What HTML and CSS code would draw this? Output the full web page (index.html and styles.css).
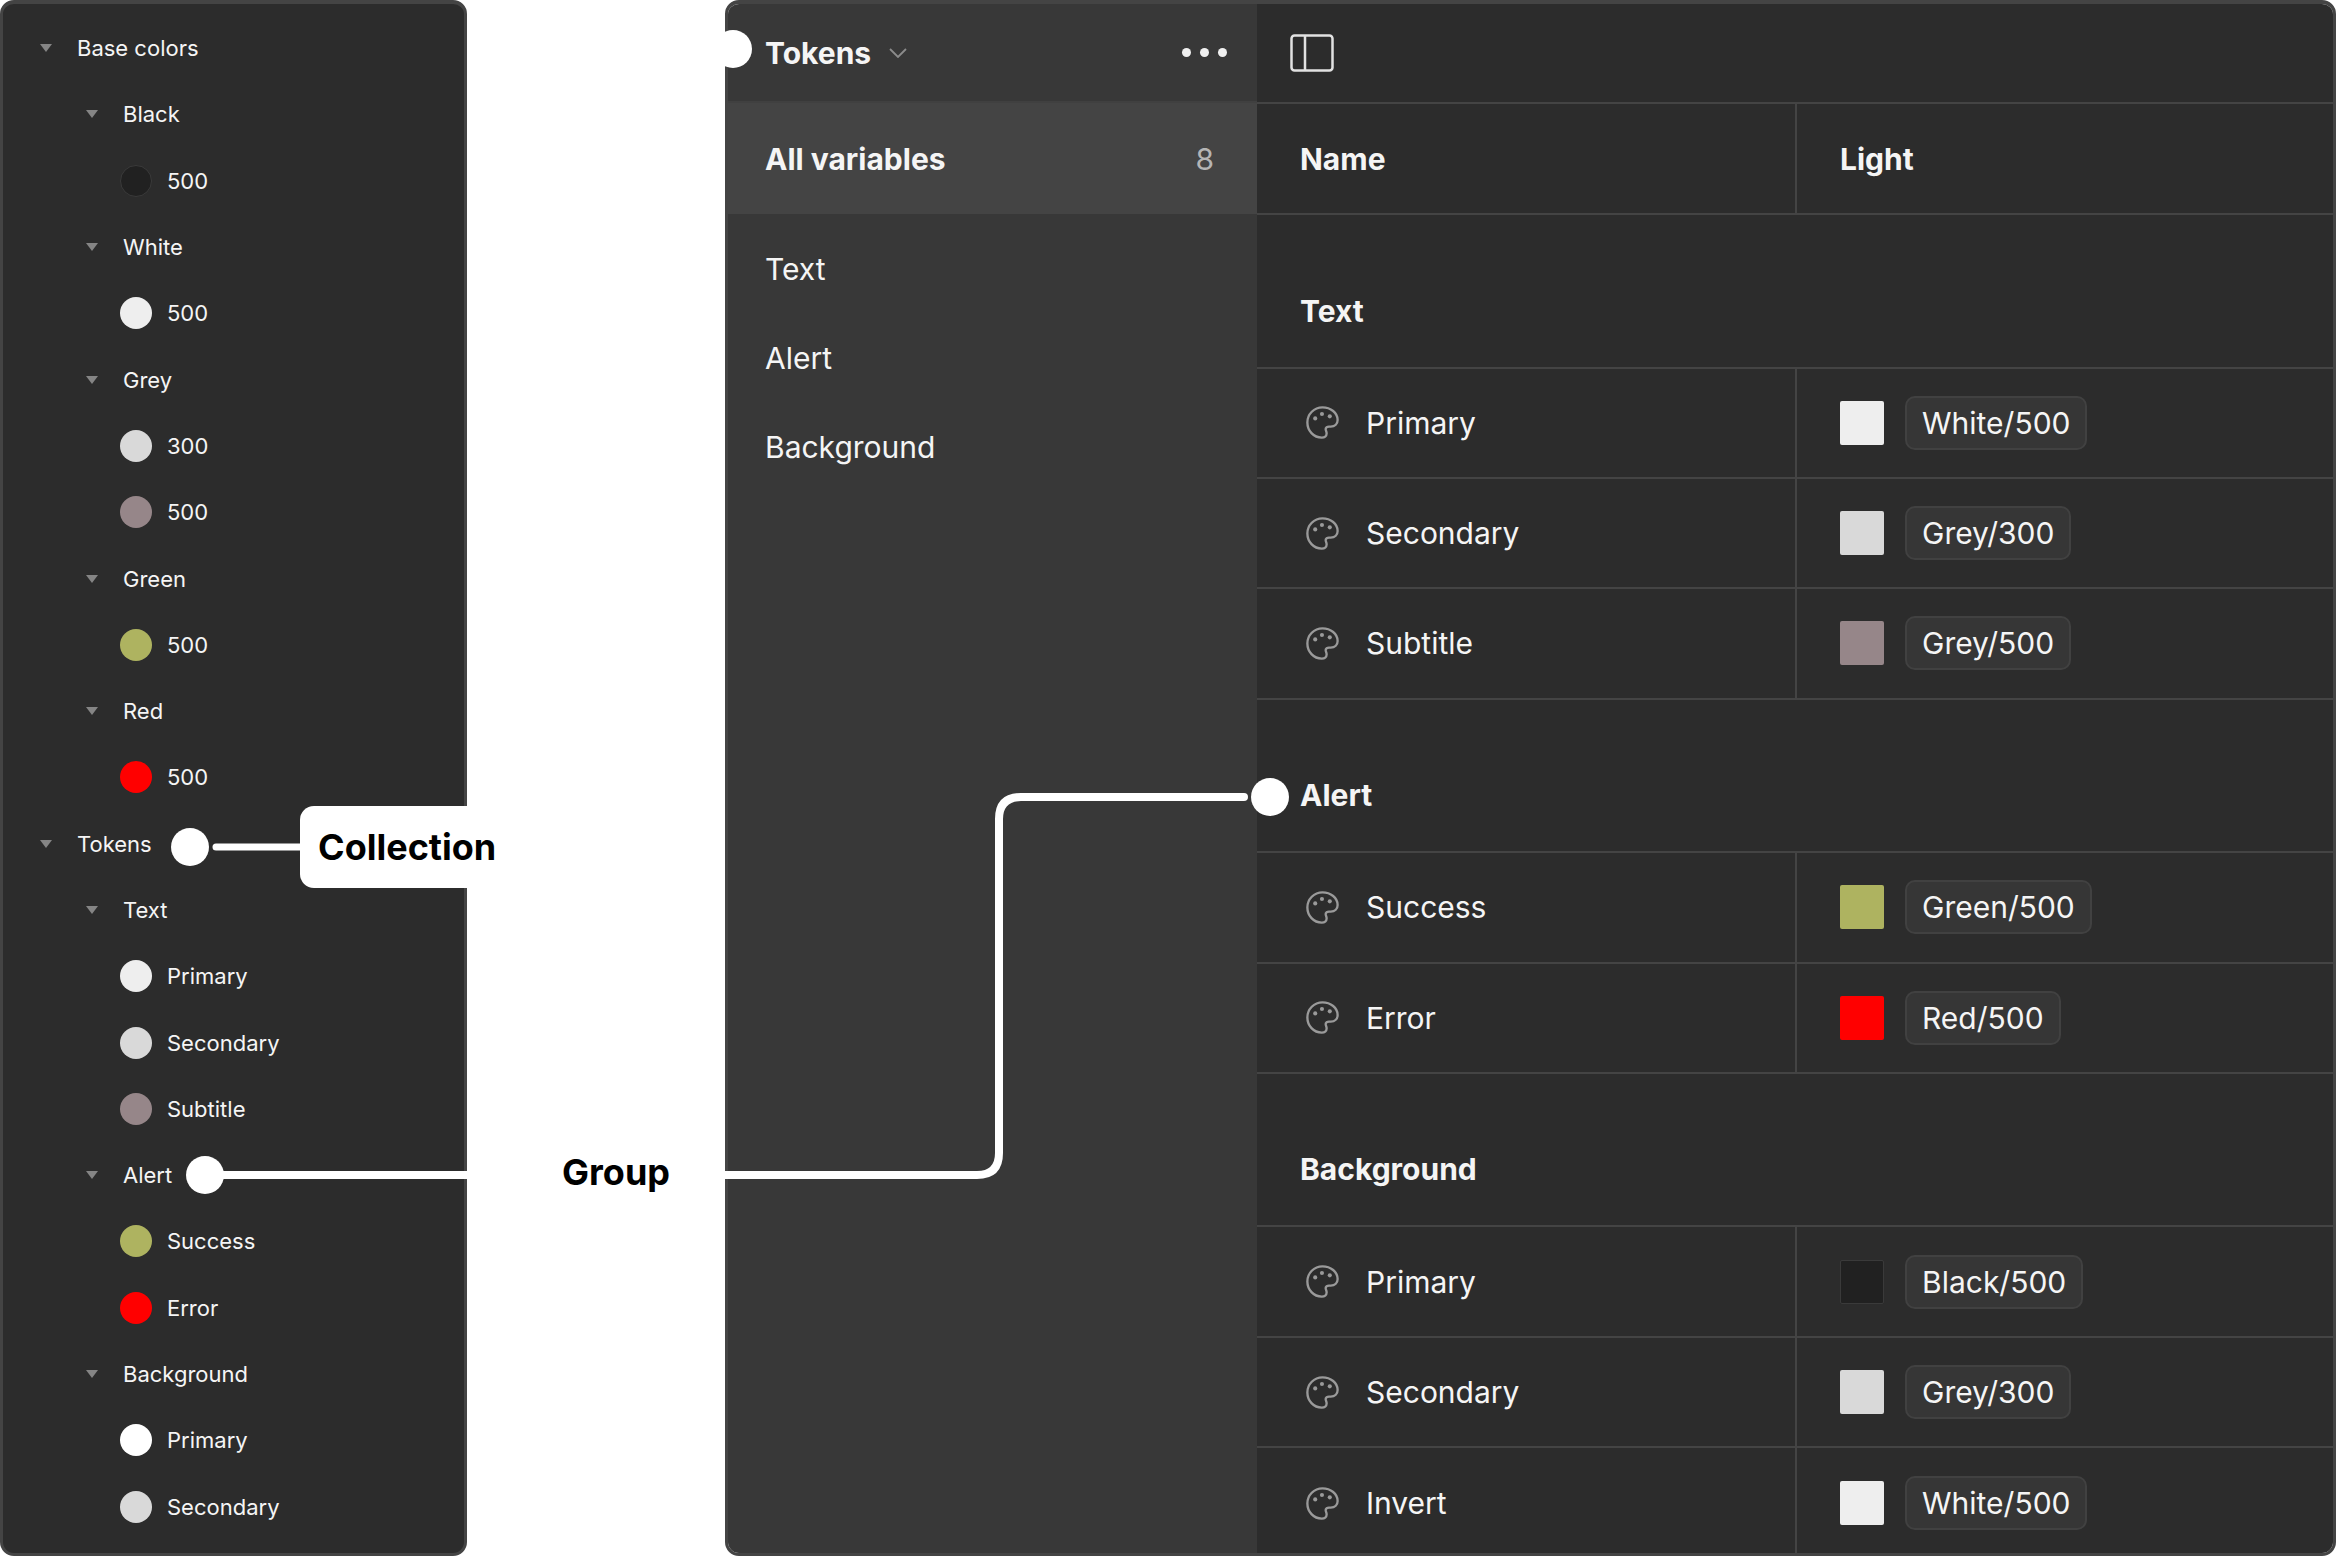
FILE: index.html
```html
<!DOCTYPE html>
<html lang="en">
<head>
    <meta charset="UTF-8">
    <title>Tokens</title>
    <link rel="stylesheet" href="styles.css">
</head>
<body>
<svg width="0" height="0" class="defs">
    <symbol id="palette" viewBox="0 0 24 24">
        <path d="M12 1C5.9 1 1 5.9 1 12c0 6 4.5 11 10.5 11 2 0 3.5-1.2 3.5-3 0-1.500-.7-2-.7-3.200 0-1.300 1.100-1.800 2.400-1.800H18c3 0 5-2 5-4.800C23 5 18 1 12 1z" fill="none" stroke="#9a9a9a" stroke-width="1.700"/>
        <circle cx="6.700" cy="9" r="1.500" fill="#9a9a9a"/>
        <circle cx="11.600" cy="5.800" r="1.500" fill="#9a9a9a"/>
        <circle cx="17.300" cy="7.500" r="1.500" fill="#9a9a9a"/>
    </symbol>
</svg>

<div class="page">
    <!-- layer list -->
    <div class="layers">
        <div class="layer lv0"><i class="tri"></i>Base colors</div>
        <div class="layer lv1"><i class="tri"></i>Black</div>
        <div class="layer lv2"><i class="dot black"></i>500</div>
        <div class="layer lv1"><i class="tri"></i>White</div>
        <div class="layer lv2"><i class="dot white"></i>500</div>
        <div class="layer lv1"><i class="tri"></i>Grey</div>
        <div class="layer lv2"><i class="dot grey3"></i>300</div>
        <div class="layer lv2"><i class="dot grey5"></i>500</div>
        <div class="layer lv1"><i class="tri"></i>Green</div>
        <div class="layer lv2"><i class="dot green"></i>500</div>
        <div class="layer lv1"><i class="tri"></i>Red</div>
        <div class="layer lv2"><i class="dot red"></i>500</div>
        <div class="layer lv0"><i class="tri"></i>Tokens</div>
        <div class="layer lv1"><i class="tri"></i>Text</div>
        <div class="layer lv2"><i class="dot white"></i>Primary</div>
        <div class="layer lv2"><i class="dot grey3"></i>Secondary</div>
        <div class="layer lv2"><i class="dot grey5"></i>Subtitle</div>
        <div class="layer lv1"><i class="tri"></i>Alert</div>
        <div class="layer lv2"><i class="dot green"></i>Success</div>
        <div class="layer lv2"><i class="dot red"></i>Error</div>
        <div class="layer lv1"><i class="tri"></i>Background</div>
        <div class="layer lv2"><i class="dot pure"></i>Primary</div>
        <div class="layer lv2"><i class="dot grey3"></i>Secondary</div>
    </div>

    <div class="gap"></div>

    <!-- variables window -->
    <div class="window">
        <div class="side">
            <div class="side-head">
                <span class="coll-name">Tokens</span>
                <svg class="chev" width="18" height="10" viewBox="0 0 18 10"><path d="M1 1l8 8 8-8" fill="none" stroke="#8c8c8c" stroke-width="1.800"/></svg>
                <div class="more"><i></i><i></i><i></i></div>
            </div>
            <div class="side-all"><span>All variables</span><span class="count">8</span></div>
            <div class="side-item first">Text</div>
            <div class="side-item">Alert</div>
            <div class="side-item">Background</div>
        </div>

        <div class="table">
            <div class="toolbar">
                <svg width="44" height="38" viewBox="0 0 44 38"><rect x="1.500" y="1.500" width="41" height="35" rx="3" fill="none" stroke="#e2e2e2" stroke-width="2.500"/><path d="M15 2v34" stroke="#e2e2e2" stroke-width="2.500"/></svg>
            </div>
            <div class="row head">
                <div class="c-name">Name</div>
                <div class="c-val">Light</div>
            </div>

            <div class="group">Text</div>
            <div class="row">
                <div class="c-name"><svg class="pal"><use href="#palette"/></svg>Primary</div>
                <div class="c-val"><i class="sw white"></i><span class="chip">White/500</span></div>
            </div>
            <div class="row">
                <div class="c-name"><svg class="pal"><use href="#palette"/></svg>Secondary</div>
                <div class="c-val"><i class="sw grey3"></i><span class="chip">Grey/300</span></div>
            </div>
            <div class="row">
                <div class="c-name"><svg class="pal"><use href="#palette"/></svg>Subtitle</div>
                <div class="c-val"><i class="sw grey5"></i><span class="chip">Grey/500</span></div>
            </div>

            <div class="group">Alert</div>
            <div class="row">
                <div class="c-name"><svg class="pal"><use href="#palette"/></svg>Success</div>
                <div class="c-val"><i class="sw green"></i><span class="chip">Green/500</span></div>
            </div>
            <div class="row">
                <div class="c-name"><svg class="pal"><use href="#palette"/></svg>Error</div>
                <div class="c-val"><i class="sw red"></i><span class="chip">Red/500</span></div>
            </div>

            <div class="group">Background</div>
            <div class="row">
                <div class="c-name"><svg class="pal"><use href="#palette"/></svg>Primary</div>
                <div class="c-val"><i class="sw black"></i><span class="chip">Black/500</span></div>
            </div>
            <div class="row">
                <div class="c-name"><svg class="pal"><use href="#palette"/></svg>Secondary</div>
                <div class="c-val"><i class="sw grey3"></i><span class="chip">Grey/300</span></div>
            </div>
            <div class="row last">
                <div class="c-name"><svg class="pal"><use href="#palette"/></svg>Invert</div>
                <div class="c-val"><i class="sw white"></i><span class="chip">White/500</span></div>
            </div>
        </div>
    </div>

    <!-- annotations on top -->
    <svg class="marks" width="2336" height="1556" viewBox="0 0 2336 1556">
        <g fill="none" stroke="#fff" stroke-linecap="round">
            <path d="M216 847H302" stroke-width="7"/>
            <path d="M205 1175H467" stroke-width="8"/>
            <path d="M725 1175H977Q999 1175 999 1153V819Q999 797 1021 797H1244" stroke-width="8"/>
        </g>
        <g fill="#fff">
            <circle cx="190" cy="847" r="19"/>
            <circle cx="205" cy="1175" r="19"/>
            <circle cx="733" cy="49" r="19"/>
            <circle cx="1270" cy="797" r="19"/>
        </g>
    </svg>
    <div class="label collection">Collection</div>
    <div class="label group-label">Group</div>
</div>
</body>
</html>
```

FILE: styles.css
```css
*{
    box-sizing: border-box;
}
body{
    margin: 0;
    background-color: white;
    font-family: Inter, "Liberation Sans", sans-serif;
    color: #f5f5f5;
}
i{
    display: block;
    flex: none;
}
.defs{
    position: absolute;
}
.page{
    position: relative;
    display: flex;
    width: 2336px;
    height: 1556px;
    overflow: hidden;
}

/* layer list */
.layers{
    width: 467px;
    height: 1556px;
    padding-top: 11px;
    background-color: #2c2c2c;
    border: 3px solid #444;
    border-top-width: 4px;
    border-radius: 14px;
    flex: none;
}
.layer{
    display: flex;
    align-items: center;
    height: 66.3px;
    font-size: 22px;
}
.lv0{
    padding-left: 37px;
}
.lv1{
    padding-left: 83px;
}
.lv2{
    padding-left: 117px;
}
.tri{
    width: 0;
    height: 0;
    margin-right: 25px;
    border-left: 6px solid transparent;
    border-right: 6px solid transparent;
    border-top: 8px solid #858585;
}
.dot{
    width: 32px;
    height: 32px;
    margin-right: 15px;
    border-radius: 50%;
}
.black{
    background-color: #212121;
    border: 1px solid #3a3a3a;
}
.white{
    background-color: #eeeeee;
}
.pure{
    background-color: #ffffff;
}
.grey3{
    background-color: #d9d9d9;
}
.grey5{
    background-color: #968689;
}
.green{
    background-color: #aeb360;
}
.red{
    background-color: #ff0000;
}

.gap{
    width: 258px;
    flex: none;
}

/* variables window */
.window{
    display: flex;
    flex: 1;
    height: 1556px;
    overflow: hidden;
    border: 3px solid #444;
    border-top-width: 4px;
    border-radius: 14px;
}
.side{
    width: 529px;
    background-color: #383838;
    flex: none;
}
.side-head{
    display: flex;
    align-items: center;
    height: 99px;
    padding: 0 30px 0 37px;
    border-bottom: 2px solid #404040;
}
.coll-name{
    font-size: 30px;
    font-weight: 700;
}
.chev{
    margin-left: 18px;
}
.more{
    display: flex;
    gap: 9px;
    margin-left: auto;
}
.more i{
    width: 9px;
    height: 9px;
    border-radius: 50%;
    background-color: #f0f0f0;
}
.side-all{
    display: flex;
    justify-content: space-between;
    align-items: center;
    height: 111px;
    padding: 0 43px 0 37px;
    background-color: #444;
    font-size: 30px;
    font-weight: 700;
}
.count{
    font-weight: 400;
    color: #b5b5b5;
}
.side-item{
    display: flex;
    align-items: center;
    height: 89px;
    padding-left: 37px;
    font-size: 30px;
}
.side-item.first{
    margin-top: 10px;
}

.table{
    flex: 1;
    background-color: #2c2c2c;
    font-size: 30px;
}
.toolbar{
    display: flex;
    align-items: center;
    height: 100px;
    padding-left: 33px;
    border-bottom: 2px solid #444;
}
.row{
    display: flex;
    height: 110.4px;
    border-bottom: 2px solid #444;
}
.row.head{
    height: 111px;
    font-weight: 700;
}
.row.last{
    border-bottom: 0;
}
.c-name{
    display: flex;
    align-items: center;
    width: 540px;
    padding-left: 43px;
    border-right: 2px solid #444;
}
.row.head .c-val{
    padding-left: 43px;
}
.c-val{
    display: flex;
    align-items: center;
    padding-left: 43px;
}
.group{
    display: flex;
    align-items: flex-end;
    height: 153.5px;
    padding: 0 0 38px 43px;
    border-bottom: 2px solid #444;
    font-weight: 700;
}
.pal{
    width: 33px;
    height: 33px;
    margin: 0 27px 0 6px;
    flex: none;
}
.sw{
    width: 44px;
    height: 44px;
    margin-right: 21px;
    border-radius: 2px;
}
.chip{
    padding: 7px 15px;
    line-height: 36px;
    background-color: #363636;
    border: 2px solid #414141;
    border-radius: 10px;
}

/* annotations */
.marks{
    position: absolute;
    left: 0;
    top: 0;
}
.label{
    position: absolute;
    font-size: 36px;
    font-weight: 700;
    color: #000;
}
.collection{
    left: 300px;
    top: 806px;
    width: 210px;
    height: 82px;
    padding-left: 18px;
    line-height: 82px;
    background-color: white;
    border-radius: 14px;
}
.group-label{
    left: 562px;
    top: 1150px;
}
```
